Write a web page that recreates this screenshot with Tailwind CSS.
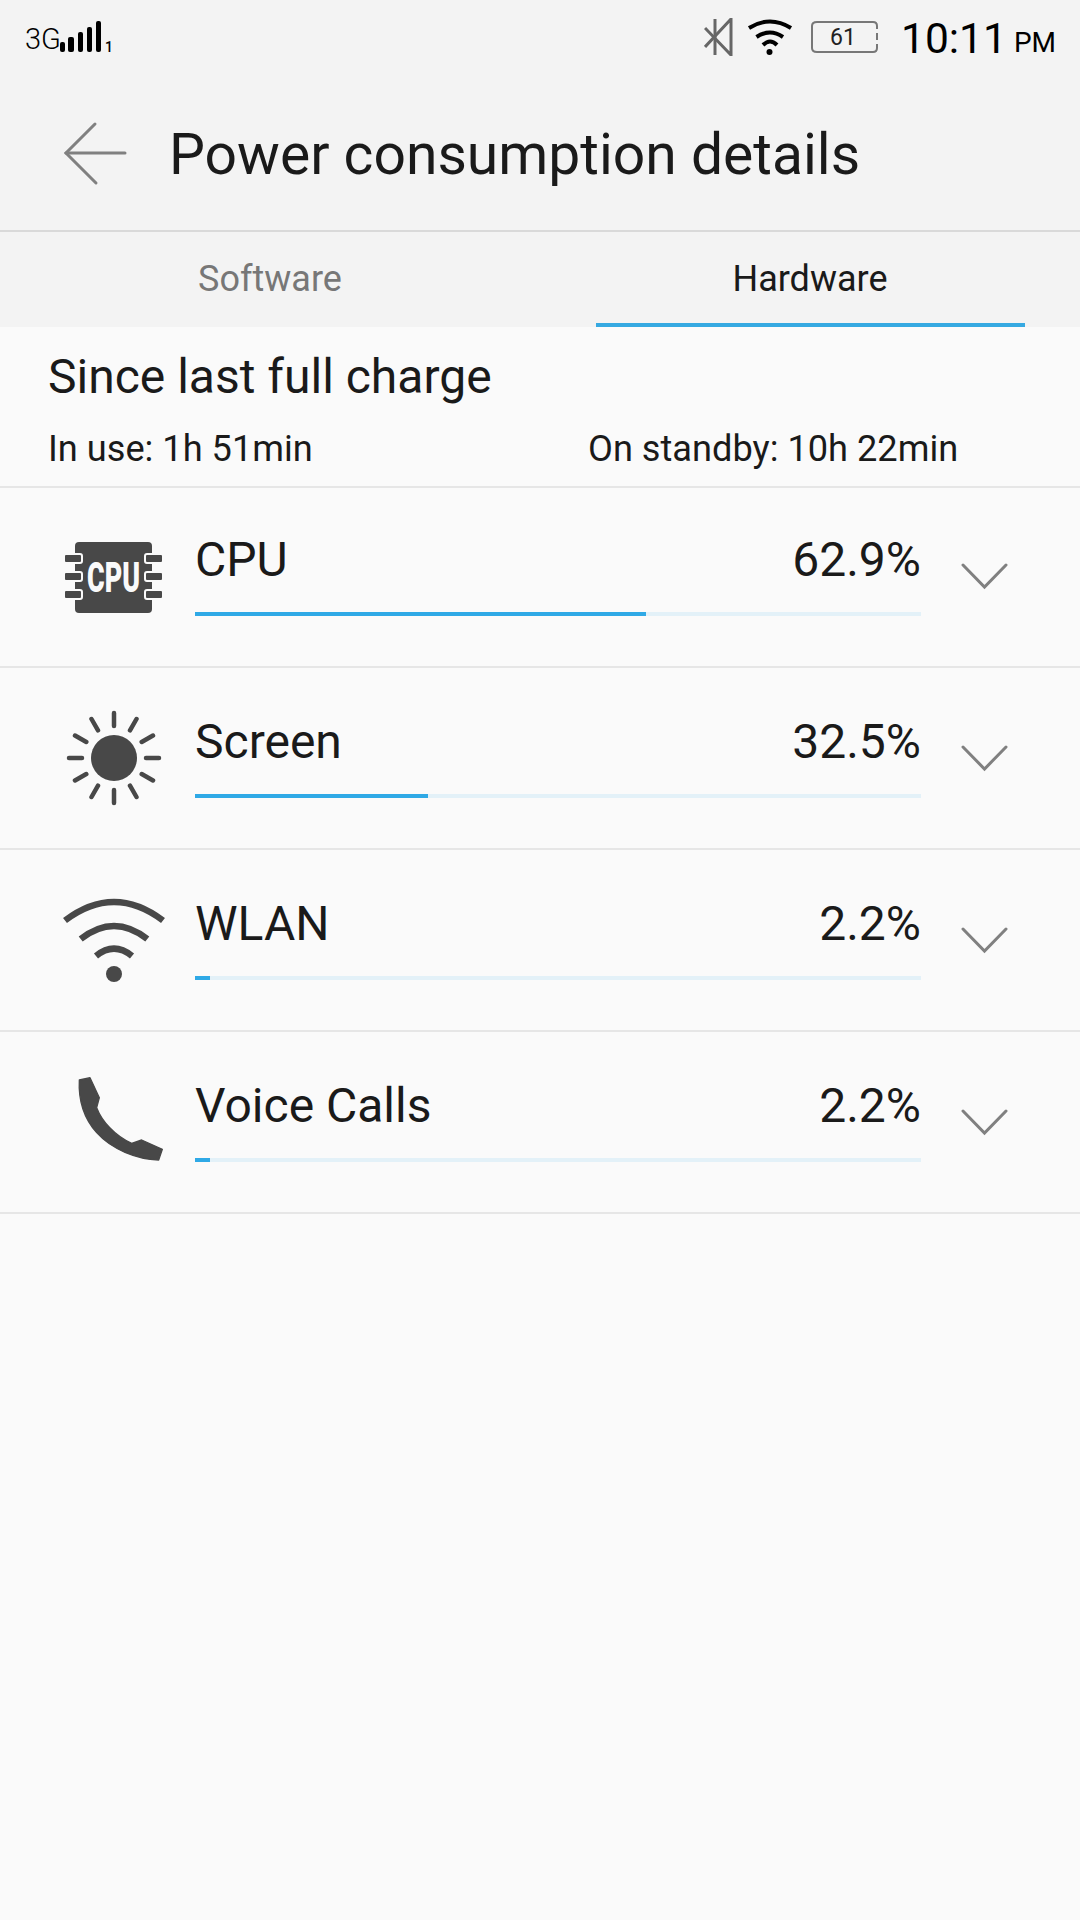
<!DOCTYPE html>
<html lang="en">

<head>
   <meta charset="UTF-8">
   <meta name="viewport" content="width=device-width, initial-scale=1.0">
   <title>Power consumption details</title>
   <script src="https://cdn.jsdelivr.net/npm/@tailwindcss/browser@4"></script>
</head>

<body class="bg-[#fafafa] font-['Roboto',sans-serif] text-[#1a1a1a]">
   <div class="w-[1080px] h-[1920px] overflow-hidden">
      <!-- status bar -->
      <div class="h-[85px] bg-[#f3f3f3] flex items-start justify-between">
         <div class="flex items-end ml-[25px] mt-[20px] h-[33px]">
            <span class="text-[29px] leading-[28px] font-light text-black w-[35px]">3G</span>
            <svg width="42" height="32" viewBox="0 0 42 32" fill="black">
               <rect x="0" y="21" width="5" height="10" rx="2" />
               <rect x="8" y="16" width="6" height="15" rx="2" />
               <rect x="18" y="11" width="5" height="20" rx="2" />
               <rect x="27" y="6" width="5" height="25" rx="2" />
               <rect x="36" y="0" width="5" height="31" rx="2" />
            </svg>
            <span class="text-[14px] leading-[12px] font-medium text-black ml-[3px]">1</span>
         </div>
         <div class="flex items-start">
            <svg class="mt-[18px]" width="30" height="38" viewBox="0 0 30 38" fill="none" stroke="#666" stroke-width="3">
               <path d="M1 29 L27 1 V37 L1 10" />
               <path d="M11 1 V37" />
            </svg>
            <svg class="mt-[18px] ml-[12px] overflow-visible" width="48" height="38" viewBox="0 0 48 38" fill="none" stroke="black" stroke-width="4">
               <path d="M3 10 Q24 -3 45 10" />
               <path d="M10.5 19 Q24 10 37 19" />
               <path d="M17 27 Q24 20 31 27" />
               <circle cx="23.5" cy="34" r="3" fill="black" stroke="none" />
            </svg>
            <svg class="mt-[20px] ml-[16px]" width="70" height="34" viewBox="0 0 70 34" fill="none" stroke="#777" stroke-width="2">
               <path d="M67 9 V6 Q67 2 63 2 H7 Q2 2 2 6 V28 Q2 32 7 32 H63 Q67 32 67 28 V24" />
               <path d="M67 13 V20" />
               <text x="33" y="25" text-anchor="middle" fill="#222" stroke="none" font-family="Roboto" font-size="23">61</text>
            </svg>
            <span class="ml-[21px] mt-[14px] text-[42.5px] leading-[50px] text-black">10:11</span>
            <span class="ml-[7px] mr-[24px] mt-[26px] text-[28px] leading-[34px] text-black">PM</span>
         </div>
      </div>

      <!-- header -->
      <div class="h-[147px] bg-[#f3f3f3] border-b-2 border-[#d9d9d9] flex items-start">
         <svg class="ml-[62px] mt-[35px]" width="68" height="66" viewBox="0 0 68 66" fill="none" stroke="#808080" stroke-width="3" stroke-linecap="round">
            <path d="M33 4 L4 33 L34 63" />
            <path d="M4 33 H63" />
         </svg>
         <h1 class="ml-[39px] mt-[36px] text-[57px] leading-[68px] font-normal">Power consumption details</h1>
      </div>

      <!-- tabs -->
      <div class="h-[95px] bg-[#f3f3f3] flex">
         <div class="w-[540px] flex justify-center pt-[26px] text-[36px] leading-[42px] text-[#777]">Software</div>
         <div class="w-[540px] flex justify-center">
            <div class="w-[429px] h-full border-b-4 border-[#36a9e1] text-center pt-[26px] text-[36px] leading-[42px] text-[#1a1a1a]">Hardware</div>
         </div>
      </div>

      <!-- summary -->
      <div class="h-[161px] border-b-2 border-[#e6e6e6] px-[48px] pt-[23px]">
         <p class="text-[48px] leading-[54px]">Since last full charge</p>
         <div class="flex mt-[24px] text-[36.2px] leading-[42px]">
            <span class="w-[540px]">In use: 1h 51min</span>
            <span>On standby: 10h 22min</span>
         </div>
      </div>

      <!-- rows -->
      <div class="h-[180px] border-b-2 border-[#e6e6e6] flex">
         <div class="w-[195px] pl-[54px] pt-[30px]">
            <svg width="120" height="120" viewBox="0 0 120 120">
               <rect x="21" y="24" width="77" height="71" rx="4" fill="#484848" />
               <g fill="#484848" stroke="#fafafa" stroke-width="2">
                  <rect x="10" y="36" width="18" height="9" rx="2" />
                  <rect x="10" y="54" width="18" height="9" rx="2" />
                  <rect x="10" y="72" width="18" height="9" rx="2" />
                  <rect x="91" y="36" width="18" height="9" rx="2" />
                  <rect x="91" y="54" width="18" height="9" rx="2" />
                  <rect x="91" y="72" width="18" height="9" rx="2" />
               </g>
               <text x="59.5" y="74" text-anchor="middle" fill="#fafafa" font-family="Roboto" font-weight="900" font-size="43" textLength="53" lengthAdjust="spacingAndGlyphs">CPU</text>
            </svg>
         </div>
         <div class="w-[726px] pt-[43px]">
            <div class="flex justify-between text-[48px] leading-[58px]"><span>CPU</span><span>62.9%</span></div>
            <div class="mt-[23px] h-[4px] bg-[#e3f1f8]">
               <div class="h-full bg-[#2fa9e6]" style="width: 62.1%"></div>
            </div>
         </div>
         <svg class="ml-[40px] mt-[75px]" width="48" height="28" viewBox="0 0 48 28" fill="none" stroke="#808080" stroke-width="3" stroke-linecap="round">
            <path d="M2 2 L23.5 24 L45 2" />
         </svg>
      </div>

      <div class="h-[182px] border-b-2 border-[#e6e6e6] flex">
         <div class="w-[195px] pl-[54px] pt-[30px]">
            <svg width="120" height="120" viewBox="0 0 120 120" fill="none" stroke="#484848" stroke-width="4.5" stroke-linecap="round">
               <circle cx="60" cy="60" r="23" fill="#484848" stroke="none" />
               <path d="M60 15 V28 M60 92 V105 M15 60 H28 M92 60 H105" />
               <path d="M37.5 21 L44 32.3 M76 87.7 L82.5 99 M82.5 21 L76 32.3 M44 87.7 L37.5 99" />
               <path d="M21 37.5 L32.3 44 M87.7 76 L99 82.5 M99 37.5 L87.7 44 M32.3 76 L21 82.5" />
            </svg>
         </div>
         <div class="w-[726px] pt-[45px]">
            <div class="flex justify-between text-[48px] leading-[58px]"><span>Screen</span><span>32.5%</span></div>
            <div class="mt-[23px] h-[4px] bg-[#e3f1f8]">
               <div class="h-full bg-[#2fa9e6]" style="width: 32.1%"></div>
            </div>
         </div>
         <svg class="ml-[40px] mt-[77px]" width="48" height="28" viewBox="0 0 48 28" fill="none" stroke="#808080" stroke-width="3" stroke-linecap="round">
            <path d="M2 2 L23.5 24 L45 2" />
         </svg>
      </div>

      <div class="h-[182px] border-b-2 border-[#e6e6e6] flex">
         <div class="w-[195px] pl-[54px] pt-[48px]">
            <svg class="overflow-visible" width="120" height="120" viewBox="0 0 120 120" fill="none" stroke="#484848" stroke-width="6.5">
               <path d="M11 22.5 Q60 -14.5 109 22.5" />
               <path d="M26.7 41 Q60 15 93.3 41" />
               <path d="M42 58 Q60 43.4 78 58" />
               <circle cx="60" cy="76" r="8" fill="#484848" stroke="none" />
            </svg>
         </div>
         <div class="w-[726px] pt-[45px]">
            <div class="flex justify-between text-[48px] leading-[58px]"><span>WLAN</span><span>2.2%</span></div>
            <div class="mt-[23px] h-[4px] bg-[#e3f1f8]">
               <div class="h-full bg-[#2fa9e6]" style="width: 2.1%"></div>
            </div>
         </div>
         <svg class="ml-[40px] mt-[77px]" width="48" height="28" viewBox="0 0 48 28" fill="none" stroke="#808080" stroke-width="3" stroke-linecap="round">
            <path d="M2 2 L23.5 24 L45 2" />
         </svg>
      </div>

      <div class="h-[182px] border-b-2 border-[#e6e6e6] flex">
         <div class="w-[195px] pl-[54px] pt-[34px]">
            <svg width="120" height="120" viewBox="42 560 360 360" fill="#484848" stroke="#484848" stroke-width="4" stroke-linejoin="round">
               <path d="M118 602 L150 595 L178 655 L170 685 C185 725 225 770 275 792 L305 782 L367 810 L356 842 C290 840 215 810 170 760 C130 715 115 660 118 602 Z" />
            </svg>
         </div>
         <div class="w-[726px] pt-[45px]">
            <div class="flex justify-between text-[48px] leading-[58px]"><span>Voice Calls</span><span>2.2%</span></div>
            <div class="mt-[23px] h-[4px] bg-[#e3f1f8]">
               <div class="h-full bg-[#2fa9e6]" style="width: 2.1%"></div>
            </div>
         </div>
         <svg class="ml-[40px] mt-[77px]" width="48" height="28" viewBox="0 0 48 28" fill="none" stroke="#808080" stroke-width="3" stroke-linecap="round">
            <path d="M2 2 L23.5 24 L45 2" />
         </svg>
      </div>
   </div>
</body>

</html>
